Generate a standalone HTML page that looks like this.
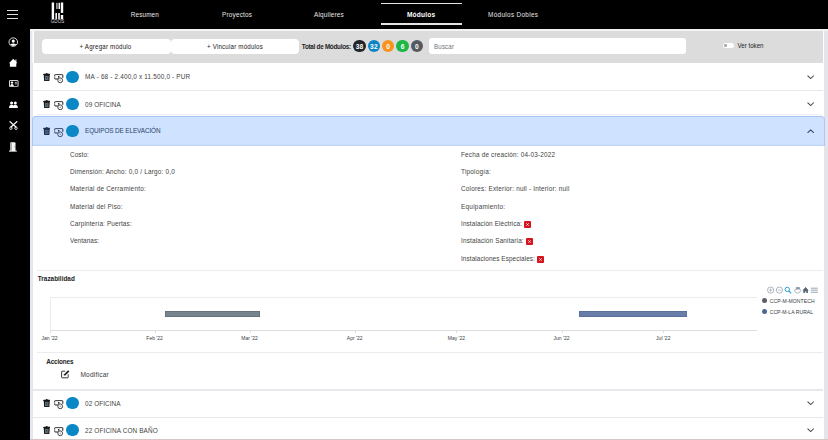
<!DOCTYPE html>
<html><head><meta charset="utf-8">
<style>
*{box-sizing:border-box;margin:0;padding:0}
html,body{width:828px;height:440px;overflow:hidden;background:#e4e4ea;font-family:"Liberation Sans",sans-serif;color:#333}
.a{position:absolute}
.t{position:absolute;white-space:nowrap;line-height:10px}
</style></head><body>


<div class="a" style="left:0;top:0;width:828px;height:29px;background:#000"></div>
<div class="a" style="left:0;top:0;width:30px;height:440px;background:#000"></div>
<div class="a" style="left:30px;top:29px;width:798px;height:2px;background:#f3f3f3"></div>
<div class="a" style="left:7px;top:10px;width:11px;height:1.2px;background:#e0e0e0"></div>
<div class="a" style="left:7px;top:14px;width:11px;height:1.2px;background:#e0e0e0"></div>
<div class="a" style="left:7px;top:17.8px;width:11px;height:1.2px;background:#e0e0e0"></div>
<svg class="a" style="left:50px;top:0px" width="16" height="26" viewBox="0 0 16 26">
  <rect x="1.7" y="2.5" width="2.4" height="16.7" fill="#fff"/>
  <rect x="6.2" y="2.8" width="1.4" height="6.2" fill="#b8b8b8"/>
  <rect x="8.5" y="2.8" width="1.5" height="6.2" fill="#f0f0f0"/>
  <rect x="5.4" y="13" width="1.6" height="6.2" fill="#f0f0f0"/>
  <rect x="8.1" y="13" width="1.8" height="6.2" fill="#e0e0e0"/>
  <rect x="10.8" y="2.5" width="2.4" height="10.4" fill="#fff"/>
  <rect x="10.8" y="15" width="2.4" height="4.2" fill="#fff"/>
  <text x="7.6" y="23.4" font-size="4.5" fill="#dcdcdc" text-anchor="middle" font-family="Liberation Sans" letter-spacing="0.1">GDOS</text>
</svg>
<div class="t" style="left:144.90px;top:9.98px;font-size:6.40px;color:#e6e6e6;font-weight:normal;letter-spacing:0.106px;transform:translateX(-50%) scaleY(1.120);transform-origin:0 7.22px;">Resumen</div>
<div class="t" style="left:237.10px;top:9.98px;font-size:6.40px;color:#e6e6e6;font-weight:normal;letter-spacing:0.198px;transform:translateX(-50%) scaleY(1.120);transform-origin:0 7.22px;">Proyectos</div>
<div class="t" style="left:329.00px;top:9.98px;font-size:6.40px;color:#e6e6e6;font-weight:normal;letter-spacing:0.194px;transform:translateX(-50%) scaleY(1.120);transform-origin:0 7.22px;">Alquileres</div>
<div class="t" style="left:513.20px;top:9.98px;font-size:6.40px;color:#e6e6e6;font-weight:normal;letter-spacing:0.327px;transform:translateX(-50%) scaleY(1.120);transform-origin:0 7.22px;">Módulos Dobles</div>
<div class="t" style="left:421.20px;top:9.91px;font-size:6.60px;color:#fff;font-weight:bold;letter-spacing:0.213px;transform:translateX(-50%) scaleY(1.080);transform-origin:0 7.29px;">Módulos</div>
<div class="a" style="left:380.5px;top:3px;width:81.5px;height:1.4px;background:#e4e4e4"></div>
<div class="a" style="left:380.5px;top:23.3px;width:81.5px;height:1.4px;background:#e4e4e4"></div>
<svg class="a" style="left:8px;top:36.5px" width="11" height="11" viewBox="0 0 11 11">
  <circle cx="5.27" cy="5.1" r="4.25" fill="none" stroke="#f2f2f2" stroke-width="0.9"/>
  <circle cx="5.27" cy="4.1" r="1.55" fill="#fff"/>
  <path d="M2.2 7.6 Q5.27 5.6 8.3 7.6 Q5.27 10.3 2.2 7.6Z" fill="#fff"/>
</svg>
<svg class="a" style="left:8px;top:57px" width="11" height="11" viewBox="8 57 11 11">
  <path d="M9 63.2 L13.2 58.8 L15.4 61 L15.4 59.6 L16.4 59.6 L16.4 62 L17.3 63.2 L16.3 63.2 L16.3 66.8 L9.9 66.8 L9.9 63.2Z" fill="#fff"/>
</svg>
<svg class="a" style="left:8.6px;top:79.8px" width="10" height="7.4" viewBox="0 0 10 7.4">
  <rect x="0.45" y="0.45" width="8.6" height="6.3" rx="0.6" fill="none" stroke="#fff" stroke-width="0.9"/>
  <circle cx="3" cy="2.6" r="1.2" fill="#fff"/>
  <path d="M1.1 6.2 Q1.4 4.1 3 4.1 Q4.6 4.1 4.9 6.2Z" fill="#fff"/>
  <rect x="5.8" y="1.9" width="2.1" height="0.8" fill="#ddd"/>
  <rect x="5.8" y="3.5" width="2.1" height="0.8" fill="#ddd"/>
</svg>
<svg class="a" style="left:8.6px;top:100.6px" width="9" height="8" viewBox="0 0 9 8">
  <circle cx="2.6" cy="1.9" r="1.5" fill="#fff"/>
  <circle cx="6.3" cy="1.9" r="1.5" fill="#fff"/>
  <path d="M0 7 Q0.2 3.8 2.6 3.8 Q5 3.8 5.2 7Z" fill="#fff"/>
  <path d="M3.7 7 Q3.9 3.8 6.3 3.8 Q8.7 3.8 8.9 7Z" fill="#fff"/>
</svg>
<svg class="a" style="left:8.6px;top:121px" width="9" height="9" viewBox="0 0 9 9">
  <path d="M0.6 0.3 L7.2 6.3 M8.3 0.3 L1.7 6.3" stroke="#fff" stroke-width="1.2"/>
  <circle cx="1.9" cy="7.2" r="1.25" fill="none" stroke="#fff" stroke-width="0.85"/>
  <circle cx="7.0" cy="7.2" r="1.25" fill="none" stroke="#fff" stroke-width="0.85"/>
</svg>
<svg class="a" style="left:9.3px;top:141.5px" width="8" height="10" viewBox="0 0 8 10">
  <path d="M1.3 9 L1.3 1.2 Q1.3 0.3 2.2 0.3 L5.6 0.3 Q6.5 0.3 6.5 1.2 L6.5 9Z" fill="#f4f4f4"/>
  <rect x="1.3" y="0.8" width="1.6" height="8.2" fill="#a8a8a8"/>
  <rect x="0" y="8.6" width="7.8" height="1" fill="#fff"/>
  <rect x="4.9" y="4.4" width="0.7" height="0.8" fill="#666"/>
</svg>

<div class="a" style="left:30px;top:31px;width:2.2px;height:409px;background:#e3e8f4"></div>
<div class="a" style="left:33px;top:31px;width:790.5px;height:409px;background:#fff"></div>
<div class="a" style="left:32.2px;top:31px;width:1.3px;height:32px;background:#f4f4f6"></div>
<div class="a" style="left:33.5px;top:31px;width:789.5px;height:32px;background:#dcdcdc"></div>
<div class="a" style="left:42px;top:38.5px;width:128.5px;height:15.5px;background:#fff;border-radius:4px"></div>
<div class="a" style="left:171.3px;top:38.5px;width:128px;height:15.5px;background:#fff;border-radius:4px"></div>
<div class="t" style="left:105.50px;top:42.05px;font-size:6.20px;color:#222;font-weight:normal;letter-spacing:0.186px;transform:translateX(-50%) scaleY(1.120);transform-origin:0 7.15px;">+ Agregar módulo</div>
<div class="t" style="left:235.00px;top:42.05px;font-size:6.20px;color:#222;font-weight:normal;letter-spacing:0.184px;transform:translateX(-50%) scaleY(1.120);transform-origin:0 7.15px;">+ Vincular módulos</div>
<div class="t" style="left:301.80px;top:42.02px;font-size:6.30px;color:#222;font-weight:bold;letter-spacing:-0.259px;transform:scaleY(1.050);transform-origin:0 7.18px;">Total de Módulos:</div>
<div class="a" style="left:353.40px;top:39.8px;width:12.4px;height:12.4px;border-radius:50%;background:#212529"></div>
<div class="t" style="left:359.60px;top:41.91px;font-size:6.60px;color:#fff;font-weight:bold;letter-spacing:0.178px;transform:translateX(-50%) scaleY(1.080);transform-origin:0 7.29px;">38</div>
<div class="a" style="left:367.75px;top:39.8px;width:12.4px;height:12.4px;border-radius:50%;background:#0b84c6"></div>
<div class="t" style="left:373.95px;top:41.91px;font-size:6.60px;color:#fff;font-weight:bold;letter-spacing:0.178px;transform:translateX(-50%) scaleY(1.080);transform-origin:0 7.29px;">32</div>
<div class="a" style="left:382.10px;top:39.8px;width:12.4px;height:12.4px;border-radius:50%;background:#f7931e"></div>
<div class="t" style="left:388.30px;top:41.91px;font-size:6.60px;color:#fff;font-weight:bold;letter-spacing:0.228px;transform:translateX(-50%) scaleY(1.080);transform-origin:0 7.29px;">0</div>
<div class="a" style="left:396.45px;top:39.8px;width:12.4px;height:12.4px;border-radius:50%;background:#1db846"></div>
<div class="t" style="left:402.65px;top:41.91px;font-size:6.60px;color:#fff;font-weight:bold;letter-spacing:0.228px;transform:translateX(-50%) scaleY(1.080);transform-origin:0 7.29px;">6</div>
<div class="a" style="left:410.80px;top:39.8px;width:12.4px;height:12.4px;border-radius:50%;background:#545a60"></div>
<div class="t" style="left:417.00px;top:41.91px;font-size:6.60px;color:#fff;font-weight:bold;letter-spacing:0.228px;transform:translateX(-50%) scaleY(1.080);transform-origin:0 7.29px;">0</div>
<div class="a" style="left:428.7px;top:38.3px;width:257px;height:15.5px;background:#fff;border-radius:3px"></div>
<div class="t" style="left:434.10px;top:42.05px;font-size:6.20px;color:#6c757d;font-weight:normal;letter-spacing:0.122px;transform:scaleY(1.120);transform-origin:0 7.15px;">Buscar</div>
<div class="a" style="left:722.9px;top:43.2px;width:11.5px;height:5.2px;border-radius:3px;background:#fff"></div>
<div class="a" style="left:724.3px;top:44.3px;width:2.6px;height:2.6px;border-radius:50%;background:#aaa"></div>
<div class="t" style="left:737.50px;top:41.15px;font-size:6.20px;color:#222;font-weight:normal;letter-spacing:-0.017px;transform:scaleY(1.120);transform-origin:0 7.15px;">Ver token</div>
<svg class="a" style="left:42.7px;top:72.8px;color:#161616;--bg:#fff;--tb:#5f6b74;" width="7.5" height="8.5" viewBox="0 0 8 9">
  <path d="M0.2 1.5 Q0.2 0.7 1.1 0.7 L2.7 0.7 Q3.1 0 4 0 Q4.9 0 5.3 0.7 L6.9 0.7 Q7.8 0.7 7.8 1.5 L7.8 2.1 L0.2 2.1Z" fill="currentColor"/>
  <path d="M0.8 2.1 L7.2 2.1 L6.8 8.2 Q6.7 8.8 6 8.8 L2 8.8 Q1.3 8.8 1.2 8.2Z" fill="currentColor"/>
  <rect x="2.1" y="3" width="3.8" height="4.6" fill="var(--tb,#5f6b74)"/>
  <rect x="3.6" y="4.6" width="0.8" height="1" fill="currentColor"/>
</svg>
<svg class="a" style="left:53.6px;top:74.0px;color:#161616;--bg:#fff;--tb:#5f6b74;" width="10" height="10" viewBox="0 0 10 10">
  <path d="M0.7 2.5 V1.2 Q0.7 0.6 1.3 0.6 H8.2 Q8.8 0.6 8.8 1.2 V3.8" fill="none" stroke="currentColor" stroke-width="1"/>
  <path d="M8.3 0.6 H1.3" stroke="var(--bg,#fff)" stroke-width="0.35" opacity="0.55"/>
  <path d="M0.7 3.4 V4.4 Q0.7 5.0 1.3 5.0 H3.9" fill="none" stroke="currentColor" stroke-width="1"/>
  <circle cx="4.7" cy="2.8" r="0.85" fill="currentColor"/>
  <circle cx="6.2" cy="6.3" r="2.4" fill="var(--bg,#fff)" stroke="currentColor" stroke-width="0.8"/>
  <circle cx="6.2" cy="6.3" r="0.7" fill="currentColor" opacity="0.5"/>
</svg>
<div class="a" style="left:66.05px;top:70.8px;width:12.5px;height:12.5px;border-radius:50%;background:#0a87c5"></div>
<svg class="a" style="left:806.8px;top:74.8px" width="7.4" height="4.4" viewBox="0 0 8 5" preserveAspectRatio="none">
  <path d="M0.6 0.6 L4 4 L7.4 0.6" fill="none" stroke="#3f4650" stroke-width="1.15"/>
</svg>

<div class="t" style="left:85.10px;top:72.48px;font-size:6.40px;color:#434343;font-weight:normal;letter-spacing:0.175px;transform:scaleY(1.170);transform-origin:0 7.22px;">MA - 68 - 2.400,0 x 11.500,0 - PUR</div>
<div class="a" style="left:33px;top:90px;width:790px;height:1.3px;background:#e7e7ec"></div>
<svg class="a" style="left:42.7px;top:99.8px;color:#161616;--bg:#fff;--tb:#5f6b74;" width="7.5" height="8.5" viewBox="0 0 8 9">
  <path d="M0.2 1.5 Q0.2 0.7 1.1 0.7 L2.7 0.7 Q3.1 0 4 0 Q4.9 0 5.3 0.7 L6.9 0.7 Q7.8 0.7 7.8 1.5 L7.8 2.1 L0.2 2.1Z" fill="currentColor"/>
  <path d="M0.8 2.1 L7.2 2.1 L6.8 8.2 Q6.7 8.8 6 8.8 L2 8.8 Q1.3 8.8 1.2 8.2Z" fill="currentColor"/>
  <rect x="2.1" y="3" width="3.8" height="4.6" fill="var(--tb,#5f6b74)"/>
  <rect x="3.6" y="4.6" width="0.8" height="1" fill="currentColor"/>
</svg>
<svg class="a" style="left:53.6px;top:101.0px;color:#161616;--bg:#fff;--tb:#5f6b74;" width="10" height="10" viewBox="0 0 10 10">
  <path d="M0.7 2.5 V1.2 Q0.7 0.6 1.3 0.6 H8.2 Q8.8 0.6 8.8 1.2 V3.8" fill="none" stroke="currentColor" stroke-width="1"/>
  <path d="M8.3 0.6 H1.3" stroke="var(--bg,#fff)" stroke-width="0.35" opacity="0.55"/>
  <path d="M0.7 3.4 V4.4 Q0.7 5.0 1.3 5.0 H3.9" fill="none" stroke="currentColor" stroke-width="1"/>
  <circle cx="4.7" cy="2.8" r="0.85" fill="currentColor"/>
  <circle cx="6.2" cy="6.3" r="2.4" fill="var(--bg,#fff)" stroke="currentColor" stroke-width="0.8"/>
  <circle cx="6.2" cy="6.3" r="0.7" fill="currentColor" opacity="0.5"/>
</svg>
<div class="a" style="left:66.05px;top:97.8px;width:12.5px;height:12.5px;border-radius:50%;background:#0a87c5"></div>
<svg class="a" style="left:806.8px;top:101.8px" width="7.4" height="4.4" viewBox="0 0 8 5" preserveAspectRatio="none">
  <path d="M0.6 0.6 L4 4 L7.4 0.6" fill="none" stroke="#3f4650" stroke-width="1.15"/>
</svg>

<div class="t" style="left:85.10px;top:99.58px;font-size:6.40px;color:#434343;font-weight:normal;letter-spacing:0.099px;transform:scaleY(1.170);transform-origin:0 7.22px;">09 OFICINA</div>
<div class="a" style="left:37px;top:113.6px;width:786px;height:0.8px;background:#f1f1f3"></div>
<div class="a" style="left:32px;top:116.2px;width:793px;height:29.6px;background:#cfe2ff;border:1px solid #a6c8f8;border-top:1.5px solid #a6c6f4;border-bottom:none;border-radius:4px 4px 0 0;box-shadow:inset 0 -1.3px 0 #bdd5f7"></div>
<svg class="a" style="left:42.7px;top:126.8px;color:#1d2f4c;--bg:#cfe2ff;--tb:#4a5d7a;" width="7.5" height="8.5" viewBox="0 0 8 9">
  <path d="M0.2 1.5 Q0.2 0.7 1.1 0.7 L2.7 0.7 Q3.1 0 4 0 Q4.9 0 5.3 0.7 L6.9 0.7 Q7.8 0.7 7.8 1.5 L7.8 2.1 L0.2 2.1Z" fill="currentColor"/>
  <path d="M0.8 2.1 L7.2 2.1 L6.8 8.2 Q6.7 8.8 6 8.8 L2 8.8 Q1.3 8.8 1.2 8.2Z" fill="currentColor"/>
  <rect x="2.1" y="3" width="3.8" height="4.6" fill="var(--tb,#5f6b74)"/>
  <rect x="3.6" y="4.6" width="0.8" height="1" fill="currentColor"/>
</svg>
<svg class="a" style="left:53.6px;top:128.0px;color:#1d2f4c;--bg:#cfe2ff;--tb:#4a5d7a;" width="10" height="10" viewBox="0 0 10 10">
  <path d="M0.7 2.5 V1.2 Q0.7 0.6 1.3 0.6 H8.2 Q8.8 0.6 8.8 1.2 V3.8" fill="none" stroke="currentColor" stroke-width="1"/>
  <path d="M8.3 0.6 H1.3" stroke="var(--bg,#fff)" stroke-width="0.35" opacity="0.55"/>
  <path d="M0.7 3.4 V4.4 Q0.7 5.0 1.3 5.0 H3.9" fill="none" stroke="currentColor" stroke-width="1"/>
  <circle cx="4.7" cy="2.8" r="0.85" fill="currentColor"/>
  <circle cx="6.2" cy="6.3" r="2.4" fill="var(--bg,#fff)" stroke="currentColor" stroke-width="0.8"/>
  <circle cx="6.2" cy="6.3" r="0.7" fill="currentColor" opacity="0.5"/>
</svg>
<div class="a" style="left:66.05px;top:124.8px;width:12.5px;height:12.5px;border-radius:50%;background:#0a87c5"></div>
<svg class="a" style="left:806.8px;top:128.8px" width="7.4" height="4.4" viewBox="0 0 8 5" preserveAspectRatio="none">
  <path d="M0.6 4.4 L4 1 L7.4 4.4" fill="none" stroke="#34435e" stroke-width="1.15"/>
</svg>

<div class="t" style="left:85.10px;top:126.08px;font-size:6.40px;color:#2a4468;font-weight:normal;letter-spacing:-0.118px;transform:scaleY(1.170);transform-origin:0 7.22px;">EQUIPOS DE ELEVACIÓN</div>
<div class="t" style="left:70.00px;top:149.58px;font-size:6.40px;color:#434343;font-weight:normal;letter-spacing:0.086px;transform:scaleY(1.170);transform-origin:0 7.22px;">Costo:</div>
<div class="t" style="left:70.00px;top:166.96px;font-size:6.40px;color:#434343;font-weight:normal;letter-spacing:0.204px;transform:scaleY(1.170);transform-origin:0 7.22px;">Dimensión: Ancho: 0,0 / Largo: 0,0</div>
<div class="t" style="left:70.00px;top:184.34px;font-size:6.40px;color:#434343;font-weight:normal;letter-spacing:0.236px;transform:scaleY(1.170);transform-origin:0 7.22px;">Material de Cerramiento:</div>
<div class="t" style="left:70.00px;top:201.72px;font-size:6.40px;color:#434343;font-weight:normal;letter-spacing:0.209px;transform:scaleY(1.170);transform-origin:0 7.22px;">Material del Piso:</div>
<div class="t" style="left:70.00px;top:219.10px;font-size:6.40px;color:#434343;font-weight:normal;letter-spacing:0.135px;transform:scaleY(1.170);transform-origin:0 7.22px;">Carpintería: Puertas:</div>
<div class="t" style="left:70.00px;top:236.48px;font-size:6.40px;color:#434343;font-weight:normal;letter-spacing:0.074px;transform:scaleY(1.170);transform-origin:0 7.22px;">Ventanas:</div>
<div class="t" style="left:461.00px;top:149.58px;font-size:6.40px;color:#434343;font-weight:normal;letter-spacing:0.185px;transform:scaleY(1.170);transform-origin:0 7.22px;">Fecha de creación: 04-03-2022</div>
<div class="t" style="left:461.00px;top:166.96px;font-size:6.40px;color:#434343;font-weight:normal;letter-spacing:0.227px;transform:scaleY(1.170);transform-origin:0 7.22px;">Tipología:</div>
<div class="t" style="left:461.00px;top:184.34px;font-size:6.40px;color:#434343;font-weight:normal;letter-spacing:0.211px;transform:scaleY(1.170);transform-origin:0 7.22px;">Colores: Exterior: null - Interior: null</div>
<div class="t" style="left:461.00px;top:201.72px;font-size:6.40px;color:#434343;font-weight:normal;letter-spacing:0.265px;transform:scaleY(1.170);transform-origin:0 7.22px;">Equipamiento:</div>
<div class="t" style="left:461.00px;top:219.10px;font-size:6.40px;color:#434343;font-weight:normal;letter-spacing:0.109px;transform:scaleY(1.170);transform-origin:0 7.22px;">Instalación Eléctrica:</div>
<svg class="a" style="left:524.1px;top:220.7px" width="7" height="7">
  <rect x="0" y="0" width="7" height="7" rx="1" fill="#d7131d"/>
  <path d="M2.3 2.3 L4.7 4.7 M4.7 2.3 L2.3 4.7" stroke="#fff" stroke-width="0.8"/>
</svg>
<div class="t" style="left:461.00px;top:236.48px;font-size:6.40px;color:#434343;font-weight:normal;letter-spacing:0.158px;transform:scaleY(1.170);transform-origin:0 7.22px;">Instalación Sanitaria:</div>
<svg class="a" style="left:525.7px;top:238.1px" width="7" height="7">
  <rect x="0" y="0" width="7" height="7" rx="1" fill="#d7131d"/>
  <path d="M2.3 2.3 L4.7 4.7 M4.7 2.3 L2.3 4.7" stroke="#fff" stroke-width="0.8"/>
</svg>
<div class="t" style="left:461.00px;top:253.86px;font-size:6.40px;color:#434343;font-weight:normal;letter-spacing:0.089px;transform:scaleY(1.170);transform-origin:0 7.22px;">Instalaciones Especiales:</div>
<svg class="a" style="left:536.9px;top:255.5px" width="7" height="7">
  <rect x="0" y="0" width="7" height="7" rx="1" fill="#d7131d"/>
  <path d="M2.3 2.3 L4.7 4.7 M4.7 2.3 L2.3 4.7" stroke="#fff" stroke-width="0.8"/>
</svg>
<div class="a" style="left:37px;top:270px;width:786px;height:1px;background:#ececec"></div>
<div class="t" style="left:37.80px;top:273.98px;font-size:6.40px;color:#222;font-weight:bold;letter-spacing:0.005px;transform:scaleY(1.050);transform-origin:0 7.22px;">Trazabilidad</div>
<div class="a" style="left:49.5px;top:297px;width:707px;height:34px;border:1px solid #ececec;border-bottom:1px solid #dedede;border-right:none"></div>
<div class="a" style="left:164.5px;top:310.8px;width:95.1px;height:6.2px;background:#77858e;border:0.6px solid #65737d"></div>
<div class="a" style="left:578.8px;top:310.8px;width:108.4px;height:6.2px;background:#687ea9;border:0.6px solid #5a6f9a"></div>
<div class="a" style="left:49.5px;top:330px;width:1px;height:3px;background:#dedede"></div>
<div class="t" style="left:49.50px;top:333.17px;font-size:5.00px;color:#373d3f;font-weight:normal;letter-spacing:0.000px;transform:translateX(-50%) scaleY(1.100);transform-origin:0 6.73px;">Jan '22</div>
<div class="a" style="left:154.6px;top:330px;width:1px;height:3px;background:#dedede"></div>
<div class="t" style="left:154.62px;top:333.17px;font-size:5.00px;color:#373d3f;font-weight:normal;letter-spacing:0.000px;transform:translateX(-50%) scaleY(1.100);transform-origin:0 6.73px;">Feb '22</div>
<div class="a" style="left:249.6px;top:330px;width:1px;height:3px;background:#dedede"></div>
<div class="t" style="left:249.57px;top:333.17px;font-size:5.00px;color:#373d3f;font-weight:normal;letter-spacing:0.000px;transform:translateX(-50%) scaleY(1.100);transform-origin:0 6.73px;">Mar '22</div>
<div class="a" style="left:354.7px;top:330px;width:1px;height:3px;background:#dedede"></div>
<div class="t" style="left:354.69px;top:333.17px;font-size:5.00px;color:#373d3f;font-weight:normal;letter-spacing:0.000px;transform:translateX(-50%) scaleY(1.100);transform-origin:0 6.73px;">Apr '22</div>
<div class="a" style="left:456.4px;top:330px;width:1px;height:3px;background:#dedede"></div>
<div class="t" style="left:456.42px;top:333.17px;font-size:5.00px;color:#373d3f;font-weight:normal;letter-spacing:0.000px;transform:translateX(-50%) scaleY(1.100);transform-origin:0 6.73px;">May '22</div>
<div class="a" style="left:561.5px;top:330px;width:1px;height:3px;background:#dedede"></div>
<div class="t" style="left:561.54px;top:333.17px;font-size:5.00px;color:#373d3f;font-weight:normal;letter-spacing:0.000px;transform:translateX(-50%) scaleY(1.100);transform-origin:0 6.73px;">Jun '22</div>
<div class="a" style="left:663.3px;top:330px;width:1px;height:3px;background:#dedede"></div>
<div class="t" style="left:663.27px;top:333.17px;font-size:5.00px;color:#373d3f;font-weight:normal;letter-spacing:0.000px;transform:translateX(-50%) scaleY(1.100);transform-origin:0 6.73px;">Jul '22</div>
<svg class="a" style="left:765px;top:285px" width="56" height="10" viewBox="765 285 56 10">
  <circle cx="770.6" cy="290.1" r="3.1" fill="none" stroke="#8a96a3" stroke-width="0.7"/>
  <path d="M769 290.1 H772.2 M770.6 288.5 V291.7" stroke="#8a96a3" stroke-width="0.6"/>
  <circle cx="779.4" cy="290.1" r="3.1" fill="none" stroke="#8a96a3" stroke-width="0.7"/>
  <path d="M777.8 290.1 H781" stroke="#8a96a3" stroke-width="0.6"/>
  <circle cx="787.3" cy="289.4" r="2.2" fill="none" stroke="#2d9fd9" stroke-width="1"/>
  <path d="M788.8 291 L791.2 293.3" stroke="#2d9fd9" stroke-width="1.1"/>
  <path d="M795.9 289.6 L795.9 287.3 Q797.8 286.5 799.9 287.3 L799.9 289.6Z" fill="#8d99a7"/>
  <path d="M796 289.4 Q794.2 289.6 794.5 291 Q795.5 293.2 797.6 293.1 Q800.2 293 800.5 290.8 L800.2 289.3" fill="none" stroke="#9aa6b4" stroke-width="0.8"/>
  <path d="M802.5 290.4 L805.6 287 L808.7 290.4 L807.9 290.4 L807.9 293 L806.3 293 L806.3 291.4 L804.9 291.4 L804.9 293 L803.3 293 L803.3 290.4Z" fill="#55656f"/>
  <path d="M810.9 288.2 H817.8 M810.9 290.2 H817.8 M810.9 292.3 H817.8" stroke="#8c9aae" stroke-width="0.9"/>
</svg>
<div class="a" style="left:762.4px;top:298.2px;width:5px;height:5px;border-radius:50%;background:#5b5f63"></div>
<div class="t" style="left:769.70px;top:296.43px;font-size:5.10px;color:#373d3f;font-weight:normal;letter-spacing:0.066px;transform:scaleY(1.100);transform-origin:0 6.77px;">CCP-M-MONTECH</div>
<div class="a" style="left:762.4px;top:309.2px;width:5px;height:5px;border-radius:50%;background:#4d6698"></div>
<div class="t" style="left:769.70px;top:307.43px;font-size:5.10px;color:#373d3f;font-weight:normal;letter-spacing:0.033px;transform:scaleY(1.100);transform-origin:0 6.77px;">CCP-M-LA RURAL</div>
<div class="a" style="left:37px;top:352px;width:786px;height:1px;background:#ececec"></div>
<div class="t" style="left:46.30px;top:357.38px;font-size:6.40px;color:#222;font-weight:bold;letter-spacing:-0.178px;transform:scaleY(1.050);transform-origin:0 7.22px;">Acciones</div>
<svg class="a" style="left:60.5px;top:370px" width="9" height="8.5" viewBox="0 0 9 8.5">
  <path d="M4.2 1.2 H1.2 Q0.6 1.2 0.6 1.8 V7.2 Q0.6 7.8 1.2 7.8 H6.6 Q7.2 7.8 7.2 7.2 V4.3" fill="none" stroke="#222" stroke-width="0.9"/>
  <path d="M2.8 5.6 L3.1 4.2 L7.2 0.3 L8.4 1.5 L4.3 5.4Z" fill="#222"/>
</svg>
<div class="t" style="left:80.40px;top:369.71px;font-size:6.60px;color:#3a3a3a;font-weight:normal;letter-spacing:0.206px;transform:scaleY(1.150);transform-origin:0 7.29px;">Modificar</div>
<div class="a" style="left:33px;top:389.3px;width:790px;height:1.8px;background:#e7e7ec"></div>
<svg class="a" style="left:42.7px;top:398.8px;color:#161616;--bg:#fff;--tb:#5f6b74;" width="7.5" height="8.5" viewBox="0 0 8 9">
  <path d="M0.2 1.5 Q0.2 0.7 1.1 0.7 L2.7 0.7 Q3.1 0 4 0 Q4.9 0 5.3 0.7 L6.9 0.7 Q7.8 0.7 7.8 1.5 L7.8 2.1 L0.2 2.1Z" fill="currentColor"/>
  <path d="M0.8 2.1 L7.2 2.1 L6.8 8.2 Q6.7 8.8 6 8.8 L2 8.8 Q1.3 8.8 1.2 8.2Z" fill="currentColor"/>
  <rect x="2.1" y="3" width="3.8" height="4.6" fill="var(--tb,#5f6b74)"/>
  <rect x="3.6" y="4.6" width="0.8" height="1" fill="currentColor"/>
</svg>
<svg class="a" style="left:53.6px;top:400.0px;color:#161616;--bg:#fff;--tb:#5f6b74;" width="10" height="10" viewBox="0 0 10 10">
  <path d="M0.7 2.5 V1.2 Q0.7 0.6 1.3 0.6 H8.2 Q8.8 0.6 8.8 1.2 V3.8" fill="none" stroke="currentColor" stroke-width="1"/>
  <path d="M8.3 0.6 H1.3" stroke="var(--bg,#fff)" stroke-width="0.35" opacity="0.55"/>
  <path d="M0.7 3.4 V4.4 Q0.7 5.0 1.3 5.0 H3.9" fill="none" stroke="currentColor" stroke-width="1"/>
  <circle cx="4.7" cy="2.8" r="0.85" fill="currentColor"/>
  <circle cx="6.2" cy="6.3" r="2.4" fill="var(--bg,#fff)" stroke="currentColor" stroke-width="0.8"/>
  <circle cx="6.2" cy="6.3" r="0.7" fill="currentColor" opacity="0.5"/>
</svg>
<div class="a" style="left:66.05px;top:396.8px;width:12.5px;height:12.5px;border-radius:50%;background:#0a87c5"></div>
<svg class="a" style="left:806.8px;top:400.8px" width="7.4" height="4.4" viewBox="0 0 8 5" preserveAspectRatio="none">
  <path d="M0.6 0.6 L4 4 L7.4 0.6" fill="none" stroke="#3f4650" stroke-width="1.15"/>
</svg>

<div class="t" style="left:85.10px;top:398.68px;font-size:6.40px;color:#434343;font-weight:normal;letter-spacing:0.069px;transform:scaleY(1.170);transform-origin:0 7.22px;">02 OFICINA</div>
<div class="a" style="left:33px;top:416.5px;width:790px;height:1.5px;background:#e7e7ec"></div>
<svg class="a" style="left:42.7px;top:425.8px;color:#161616;--bg:#fff;--tb:#5f6b74;" width="7.5" height="8.5" viewBox="0 0 8 9">
  <path d="M0.2 1.5 Q0.2 0.7 1.1 0.7 L2.7 0.7 Q3.1 0 4 0 Q4.9 0 5.3 0.7 L6.9 0.7 Q7.8 0.7 7.8 1.5 L7.8 2.1 L0.2 2.1Z" fill="currentColor"/>
  <path d="M0.8 2.1 L7.2 2.1 L6.8 8.2 Q6.7 8.8 6 8.8 L2 8.8 Q1.3 8.8 1.2 8.2Z" fill="currentColor"/>
  <rect x="2.1" y="3" width="3.8" height="4.6" fill="var(--tb,#5f6b74)"/>
  <rect x="3.6" y="4.6" width="0.8" height="1" fill="currentColor"/>
</svg>
<svg class="a" style="left:53.6px;top:427.0px;color:#161616;--bg:#fff;--tb:#5f6b74;" width="10" height="10" viewBox="0 0 10 10">
  <path d="M0.7 2.5 V1.2 Q0.7 0.6 1.3 0.6 H8.2 Q8.8 0.6 8.8 1.2 V3.8" fill="none" stroke="currentColor" stroke-width="1"/>
  <path d="M8.3 0.6 H1.3" stroke="var(--bg,#fff)" stroke-width="0.35" opacity="0.55"/>
  <path d="M0.7 3.4 V4.4 Q0.7 5.0 1.3 5.0 H3.9" fill="none" stroke="currentColor" stroke-width="1"/>
  <circle cx="4.7" cy="2.8" r="0.85" fill="currentColor"/>
  <circle cx="6.2" cy="6.3" r="2.4" fill="var(--bg,#fff)" stroke="currentColor" stroke-width="0.8"/>
  <circle cx="6.2" cy="6.3" r="0.7" fill="currentColor" opacity="0.5"/>
</svg>
<div class="a" style="left:66.05px;top:423.8px;width:12.5px;height:12.5px;border-radius:50%;background:#0a87c5"></div>
<svg class="a" style="left:806.8px;top:427.8px" width="7.4" height="4.4" viewBox="0 0 8 5" preserveAspectRatio="none">
  <path d="M0.6 0.6 L4 4 L7.4 0.6" fill="none" stroke="#3f4650" stroke-width="1.15"/>
</svg>

<div class="t" style="left:85.10px;top:426.08px;font-size:6.40px;color:#434343;font-weight:normal;letter-spacing:0.126px;transform:scaleY(1.170);transform-origin:0 7.22px;">22 OFICINA CON BAÑO</div>
<div class="a" style="left:30px;top:439px;width:798px;height:1px;background:#d6c6c6"></div>
</body></html>
